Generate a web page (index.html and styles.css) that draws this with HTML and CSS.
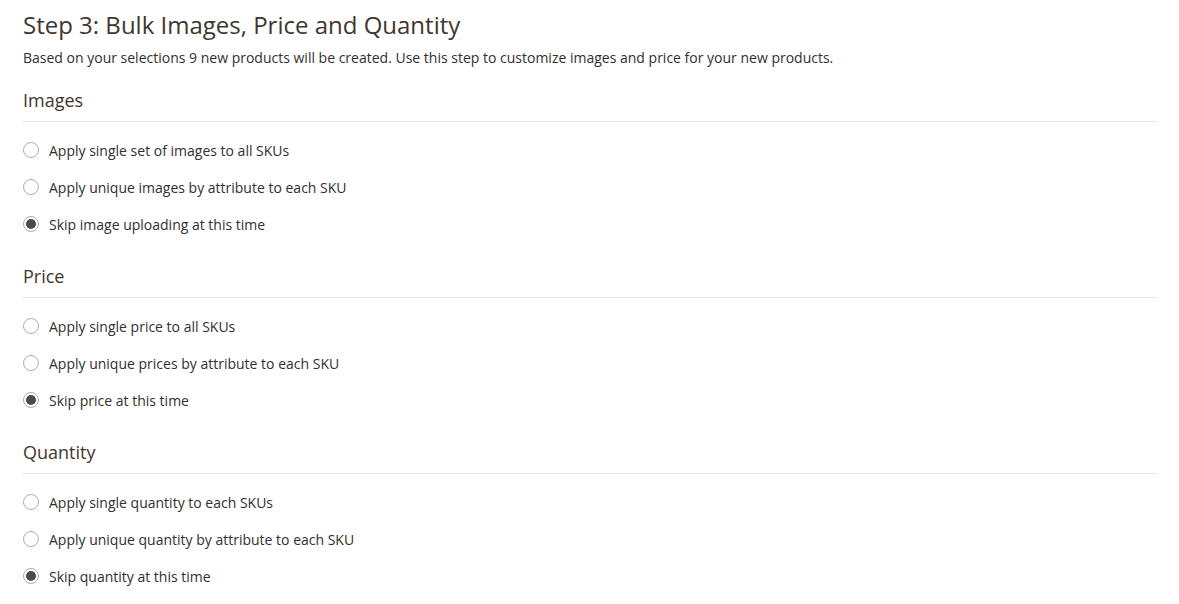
FILE: index.html
```html
<!DOCTYPE html>
<html>
<head>
<meta charset="utf-8">
<link rel="stylesheet" href="styles.css">
</head>
<body>
<div class="page">
  <h1 class="title">Step 3: Bulk Images, Price and Quantity</h1>
  <p class="desc">Based on your selections 9 new products will be created. Use this step to customize images and price for your new products.</p>

  <section class="group">
    <h2 class="group-title">Images</h2>
    <ul class="options">
      <li class="option"><span class="radio"></span><span class="label">Apply single set of images to all SKUs</span></li>
      <li class="option"><span class="radio"></span><span class="label">Apply unique images by attribute to each SKU</span></li>
      <li class="option"><span class="radio checked"></span><span class="label">Skip image uploading at this time</span></li>
    </ul>
  </section>

  <section class="group">
    <h2 class="group-title">Price</h2>
    <ul class="options">
      <li class="option"><span class="radio"></span><span class="label">Apply single price to all SKUs</span></li>
      <li class="option"><span class="radio"></span><span class="label">Apply unique prices by attribute to each SKU</span></li>
      <li class="option"><span class="radio checked"></span><span class="label">Skip price at this time</span></li>
    </ul>
  </section>

  <section class="group">
    <h2 class="group-title">Quantity</h2>
    <ul class="options">
      <li class="option"><span class="radio"></span><span class="label">Apply single quantity to each SKUs</span></li>
      <li class="option"><span class="radio"></span><span class="label">Apply unique quantity by attribute to each SKU</span></li>
      <li class="option"><span class="radio checked"></span><span class="label">Skip quantity at this time</span></li>
    </ul>
  </section>
</div>
</body>
</html>
```

FILE: styles.css
```css
html, body {
  margin: 0;
  padding: 0;
  background: #ffffff;
}
body {
  font-family: "Open Sans", "Noto Sans", sans-serif;
  color: #41362f;
}
.page {
  padding: 8px 22px 0 23px;
}
.title {
  margin: 0;
  font-size: 24px;
  font-weight: 400;
  line-height: 34px;
  color: #41362f;
}
.desc {
  margin: 6px 0 0 0;
  font-size: 14px;
  line-height: 20px;
  color: #303030;
}
.group {
  margin-top: 19px;
}
.group + .group {
  margin-top: 29px;
}
.group-title {
  margin: 0;
  font-size: 18px;
  font-weight: 400;
  line-height: 26px;
  padding-bottom: 8px;
  border-bottom: 1px solid #e3e3e3;
  color: #41362f;
}
.options {
  list-style: none;
  margin: 0;
  padding: 18px 0 0 0;
  display: flex;
  flex-direction: column;
  gap: 17px;
}
.option {
  display: flex;
  align-items: center;
  gap: 10px;
  height: 20px;
}
.radio {
  box-sizing: border-box;
  width: 16px;
  height: 16px;
  border: 1px solid #adadad;
  border-radius: 50%;
  background: #fff;
  display: flex;
  align-items: center;
  justify-content: center;
  flex: none;
}
.radio.checked::after {
  content: "";
  width: 10px;
  height: 10px;
  border-radius: 50%;
  background: #514943;
}
.label {
  font-size: 14px;
  color: #303030;
}
```
